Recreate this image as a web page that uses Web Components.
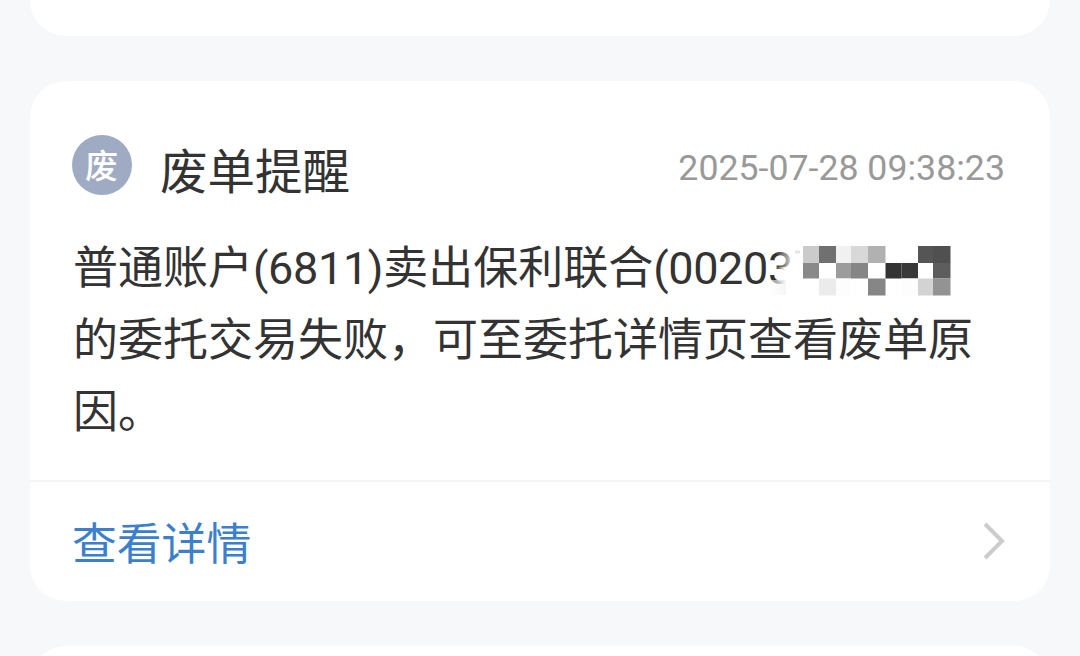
<!DOCTYPE html>
<html lang="zh-CN">
<head>
<meta charset="UTF-8">
<title>消息提醒</title>
<style>
    body {
        margin: 0;
        height: 656px;
        overflow: hidden;
        background: #f6f8fa;
        color: #333;
        font-family: Roboto, "Noto Sans CJK SC", sans-serif;
    }
    .code {
        letter-spacing: -.35px;
    }
</style>
</head>
<body>
<message-list>
    <message-card class="previous"></message-card>
    <message-card>
        <message-header slot="header" time="2025-07-28 09:38:23">
            <round-badge slot="badge">废</round-badge>
            废单提醒
        </message-header>
        <message-text slot="body">普通账户<span class="code">(6811)</span>卖出保利联合<span class="code">(00203</span><masked-code></masked-code><br>的委托交易失败，可至委托详情页查看废单原<br>因。</message-text>
        <detail-link slot="footer">查看详情</detail-link>
    </message-card>
    <message-card class="next"></message-card>
</message-list>

<script>
class MessageList extends HTMLElement {
    constructor(){
        super()
        this.shadowDOM = this.attachShadow({ mode: 'open'})
    }

    connectedCallback() {
        this.shadowDOM.innerHTML = `
            <style>
                :host {
                    display: flex;
                    flex-direction: column;
                    gap: 45px;
                    height: 656px;
                    padding: 0 30px;
                    box-sizing: border-box;
                    overflow: hidden;
                }
                ::slotted(message-card) {
                    flex: none;
                    height: 520px;
                }
                ::slotted(.previous) {
                    height: 90px;
                    margin-top: -54px;
                }
                ::slotted(.next) {
                    height: 90px;
                }
            </style>
            <slot></slot>
        `
    }
}

class MessageCard extends HTMLElement {
    constructor(){
        super()
        this.shadowDOM = this.attachShadow({ mode: 'open'})
    }

    connectedCallback() {
        this.shadowDOM.innerHTML = `
            <style>
                :host {
                    display: grid;
                    grid-template-rows: 152px 247px 121px;
                    background: #fff;
                    border-radius: 36px;
                    overflow: hidden;
                }
            </style>
            <slot name="header"></slot>
            <slot name="body"></slot>
            <slot name="footer"></slot>
        `
    }
}

class MessageHeader extends HTMLElement {
    constructor(){
        super()
        this.shadowDOM = this.attachShadow({ mode: 'open'})
    }

    connectedCallback() {
        this.render()
    }

    render(){
        this.shadowDOM.innerHTML = `
            <style>
                :host {
                    display: flex;
                    align-items: flex-start;
                    padding: 54px 45px 0 42px;
                }
                .title {
                    flex: 1;
                    margin-left: 28px;
                    font-size: 47.5px;
                    line-height: 76px;
                }
                time {
                    color: #999;
                    font-size: 35.7px;
                    line-height: 66px;
                }
            </style>
            <slot name="badge"></slot>
            <div class="title"><slot></slot></div>
            <time>${this.getAttribute('time')}</time>
        `
    }
}

class RoundBadge extends HTMLElement {
    constructor(){
        super()
        this.shadowDOM = this.attachShadow({ mode: 'open'})
    }

    connectedCallback() {
        this.shadowDOM.innerHTML = `
            <style>
                :host {
                    display: flex;
                    justify-content: center;
                    box-sizing: border-box;
                    width: 60px;
                    height: 60px;
                    padding-right: 1px;
                    border-radius: 50%;
                    background: #9fabc3;
                    color: #fff;
                    font-size: 33px;
                    font-weight: 500;
                    line-height: 63px;
                }
            </style>
            <slot></slot>
        `
    }
}

class MessageText extends HTMLElement {
    constructor(){
        super()
        this.shadowDOM = this.attachShadow({ mode: 'open'})
    }

    connectedCallback() {
        this.shadowDOM.innerHTML = `
            <style>
                :host {
                    display: block;
                    padding: 0 30px 0 43px;
                    font-size: 45px;
                    line-height: 72px;
                    white-space: nowrap;
                }
            </style>
            <slot></slot>
        `
    }
}

// Pixelated block that hides the end of the stock code
class MaskedCode extends HTMLElement {
    constructor(){
        super()
        this.shadowDOM = this.attachShadow({ mode: 'open'})
    }

    connectedCallback() {
        this.render()
    }

    render(){
        const rows = [
            ['#cbcbcb', '#707070', '#f1f1f1', '#d8d8d8', '#b1b1b1', '', '', '#555', '#505050'],
            ['#898989', '', '#9c9c9c', '#858585', '', '#333', '#393939', '', '#5d5d5d'],
            ['', '#ebebeb', '#fdfdfd', '', '#868686', '', '#fdfdfd', '#d3d3d3', '#939393']
        ]
        const xs = [35, 51, 68, 83, 100, 117.5, 133.5, 150, 165, 182.5]
        const ys = [1, 18, 33.5, 50.5]
        const cells = rows.map((row, r) => row.map((fill, c) => fill
            ? `<rect x="${xs[c]}" y="${ys[r]}" width="${xs[c + 1] - xs[c]}" height="${ys[r + 1] - ys[r]}" fill="${fill}"/>`
            : '').join('')).join('')

        this.shadowDOM.innerHTML = `
            <style>
                :host {
                    display: inline-block;
                    width: 183px;
                    height: 52px;
                    margin-left: -25px;
                    vertical-align: -13px;
                    line-height: 0;
                    position: relative;
                }
            </style>
            <svg width="183" height="52" viewBox="0 0 183 52">
                <defs>
                    <linearGradient id="fade" x1="0" y1="0" x2="1" y2="0">
                        <stop offset="0" stop-color="#fff" stop-opacity="0"/>
                        <stop offset="1" stop-color="#fff"/>
                    </linearGradient>
                    <linearGradient id="smudge" x1="0" y1="0" x2="1" y2="0">
                        <stop offset="0" stop-color="#fff"/>
                        <stop offset="1" stop-color="#eee"/>
                    </linearGradient>
                </defs>
                <rect x="8" y="0" width="20" height="22" fill="url(#fade)"/>
                <rect x="8" y="22" width="9" height="18" fill="url(#fade)"/>
                <rect x="17" y="22" width="16" height="18" fill="#fff"/>
                <rect x="2" y="35" width="16" height="15" fill="url(#smudge)" opacity=".6"/>
                <rect x="27" y="5.5" width="5" height="3" fill="#e6e6e6"/>
                ${cells}
            </svg>
        `
    }
}

class DetailLink extends HTMLElement {
    constructor(){
        super()
        this.shadowDOM = this.attachShadow({ mode: 'open'})
    }

    connectedCallback() {
        this.shadowDOM.innerHTML = `
            <style>
                :host {
                    display: flex;
                    align-items: center;
                    justify-content: space-between;
                    padding: 6px 44px 0 42px;
                    border-top: 2px solid #f4f5f6;
                    color: #3b7fcd;
                    font-size: 44.8px;
                    line-height: 66px;
                }
                svg {
                    display: block;
                    margin-bottom: 8px;
                }
            </style>
            <slot></slot>
            <svg width="24" height="40" viewBox="0 0 24 40" fill="none" stroke="#ccc" stroke-width="4">
                <path d="M3 3L20 20L3 37"/>
            </svg>
        `
    }
}

customElements.define('message-list', MessageList)
customElements.define('message-card', MessageCard)
customElements.define('message-header', MessageHeader)
customElements.define('round-badge', RoundBadge)
customElements.define('message-text', MessageText)
customElements.define('masked-code', MaskedCode)
customElements.define('detail-link', DetailLink)
</script>
</body>
</html>
